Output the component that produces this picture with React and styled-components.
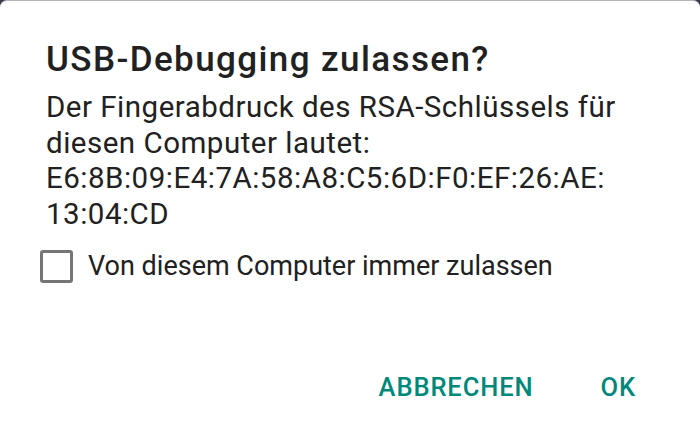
import React from "react";
import styled, { createGlobalStyle } from "styled-components";

const Global = createGlobalStyle`
  html, body {
    margin: 0;
    padding: 0;
    background: #3b3a4f;
  }
`;

const Dialog = styled.div`
  width: 700px;
  height: 429px;
  box-sizing: border-box;
  background: #ffffff;
  border-top: 1px solid #b4b4b8;
  border-radius: 7px 7px 0 0;
  padding: 39px 64px 0 46px;
  display: flex;
  flex-direction: column;
  font-family: Roboto, "Liberation Sans", sans-serif;
  color: #212121;
`;

const Title = styled.h1`
  margin: 0;
  font-size: 35px;
  font-weight: 500;
  line-height: 40px;
  letter-spacing: 1.4px;
`;

const Message = styled.p`
  margin: 10px 0 0;
  font-size: 29.5px;
  line-height: 35.6px;
  font-weight: 400;
  letter-spacing: 0.5px;
`;

const CheckRow = styled.label`
  display: flex;
  align-items: center;
  gap: 15px;
  margin: 17px 0 0 -6px;
  font-size: 27px;
  line-height: 34px;
`;

const Box = styled.span`
  width: 33px;
  height: 33px;
  box-sizing: border-box;
  border: 3px solid #757575;
  border-radius: 3px;
  flex-shrink: 0;
`;

const Actions = styled.div`
  margin-top: auto;
  margin-bottom: 28px;
  display: flex;
  justify-content: flex-end;
  gap: 67px;
`;

const Button = styled.span`
  font-size: 25.5px;
  line-height: 28px;
  font-weight: 500;
  color: #00897b;
  letter-spacing: 0.9px;
  text-transform: uppercase;
`;

export default function App() {
  return (
    <>
      <Global />
      <Dialog>
        <Title>USB-Debugging zulassen?</Title>
        <Message>
          Der Fingerabdruck des RSA-Schlüssels für
          <br />
          diesen Computer lautet:
          <br />
          E6:8B:09:E4:7A:58:A8:C5:6D:F0:EF:26:AE:
          <br />
          13:04:CD
        </Message>
        <CheckRow>
          <Box />
          Von diesem Computer immer zulassen
        </CheckRow>
        <Actions>
          <Button>Abbrechen</Button>
          <Button>OK</Button>
        </Actions>
      </Dialog>
    </>
  );
}
